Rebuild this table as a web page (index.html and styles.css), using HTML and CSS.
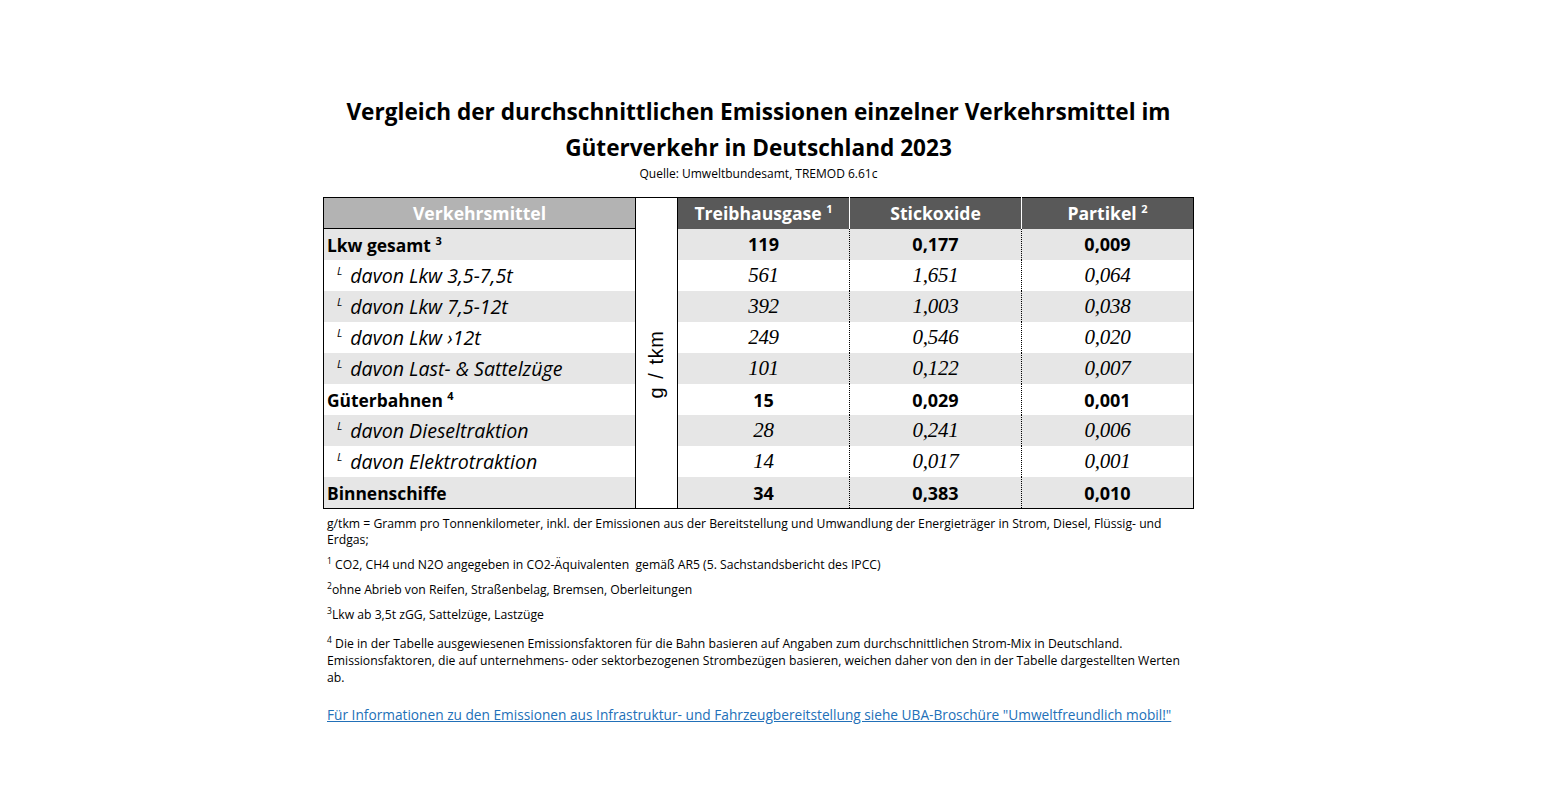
FILE: index.html
```html
<!DOCTYPE html>
<html lang="de">
<head>
<meta charset="utf-8">
<title>Vergleich der Emissionen im Güterverkehr</title>
<link rel="stylesheet" href="styles.css">
</head>
<body>
<div class="wrap">
  <h1 class="title">Vergleich der durchschnittlichen Emissionen einzelner Verkehrsmittel im<br>Güterverkehr in Deutschland 2023</h1>
  <p class="source">Quelle: Umweltbundesamt, TREMOD 6.61c</p>
  <table class="emis">
    <colgroup>
      <col class="c-name"><col class="c-unit"><col class="c-val"><col class="c-val"><col class="c-val">
    </colgroup>
    <thead>
      <tr>
        <th class="h-name">Verkehrsmittel</th>
        <th class="h-unit"></th>
        <th class="h-val">Treibhausgase <sup>1</sup></th>
        <th class="h-val">Stickoxide</th>
        <th class="h-val">Partikel <sup>2</sup></th>
      </tr>
    </thead>
    <tbody>
      <tr class="main odd">
        <td class="name">Lkw gesamt <sup>3</sup></td>
        <td class="unit" rowspan="9"><span class="unit-label">g / tkm</span></td>
        <td class="val first">119</td><td class="val">0,177</td><td class="val">0,009</td>
      </tr>
      <tr class="sub">
        <td class="name"><sup class="l">L</sup>davon Lkw 3,5-7,5t</td>
        <td class="val first">561</td><td class="val">1,651</td><td class="val">0,064</td>
      </tr>
      <tr class="sub odd">
        <td class="name"><sup class="l">L</sup>davon Lkw 7,5-12t</td>
        <td class="val first">392</td><td class="val">1,003</td><td class="val">0,038</td>
      </tr>
      <tr class="sub">
        <td class="name"><sup class="l">L</sup>davon Lkw ›12t</td>
        <td class="val first">249</td><td class="val">0,546</td><td class="val">0,020</td>
      </tr>
      <tr class="sub odd">
        <td class="name"><sup class="l">L</sup>davon Last- &amp; Sattelzüge</td>
        <td class="val first">101</td><td class="val">0,122</td><td class="val">0,007</td>
      </tr>
      <tr class="main">
        <td class="name">Güterbahnen <sup>4</sup></td>
        <td class="val first">15</td><td class="val">0,029</td><td class="val">0,001</td>
      </tr>
      <tr class="sub odd">
        <td class="name"><sup class="l">L</sup>davon Dieseltraktion</td>
        <td class="val first">28</td><td class="val">0,241</td><td class="val">0,006</td>
      </tr>
      <tr class="sub">
        <td class="name"><sup class="l">L</sup>davon Elektrotraktion</td>
        <td class="val first">14</td><td class="val">0,017</td><td class="val">0,001</td>
      </tr>
      <tr class="main odd">
        <td class="name">Binnenschiffe</td>
        <td class="val first">34</td><td class="val">0,383</td><td class="val">0,010</td>
      </tr>
    </tbody>
  </table>
  <div class="notes">
    <p>g/tkm = Gramm pro Tonnenkilometer, inkl. der Emissionen aus der Bereitstellung und Umwandlung der Energieträger in Strom, Diesel, Flüssig- und Erdgas;</p>
    <p><sup>1</sup> CO2, CH4 und N2O angegeben in CO2-Äquivalenten&nbsp; gemäß AR5 (5. Sachstandsbericht des IPCC)</p>
    <p><sup>2</sup>ohne Abrieb von Reifen, Straßenbelag, Bremsen, Oberleitungen</p>
    <p><sup>3</sup>Lkw ab 3,5t zGG, Sattelzüge, Lastzüge</p>
    <p class="fn4"><sup>4</sup> Die in der Tabelle ausgewiesenen Emissionsfaktoren für die Bahn basieren auf Angaben zum durchschnittlichen Strom-Mix in Deutschland. Emissionsfaktoren, die auf unternehmens- oder sektorbezogenen Strombezügen basieren, weichen daher von den in der Tabelle dargestellten Werten ab.</p>
    <p class="link-line"><a href="#">Für Informationen zu den Emissionen aus Infrastruktur- und Fahrzeugbereitstellung siehe UBA-Broschüre "Umweltfreundlich mobil!"</a></p>
  </div>
</div>
</body>
</html>
```

FILE: styles.css
```css
html, body {
  margin: 0;
  padding: 0;
  background: #ffffff;
}

body {
  font-family: "Open Sans", Lato, sans-serif;
  color: #000000;
}

.wrap {
  width: 871px;
  margin-left: 323px;
  padding-top: 94px;
}

.title {
  margin: 0;
  font-size: 22.6px;
  line-height: 36px;
  font-weight: 700;
  text-align: center;
}

.source {
  margin: 0 0 15px 0;
  font-size: 12px;
  line-height: 16px;
  text-align: center;
}

.emis {
  width: 871px;
  border-collapse: collapse;
  table-layout: fixed;
  border: 1px solid #000;
}

.c-name { width: 312px; }
.c-unit { width: 42px; }
.c-val { width: 172px; }

.emis th {
  height: 30px;
  padding: 0;
  color: #ffffff;
  font-size: 17.6px;
  font-weight: 700;
  text-align: center;
  vertical-align: middle;
}

.emis th sup,
.emis td sup {
  font-size: 11px;
  vertical-align: 7px;
  line-height: 0;
}

.h-name {
  background: #b3b3b3;
  border-bottom: 1px solid #000;
}

.h-unit {
  background: #ffffff;
  border-left: 1px solid #000;
  border-right: 1px solid #000;
}

.h-val {
  background: #595959;
  border-left: 1px solid #ffffff;
}

.h-unit + .h-val {
  border-left: 1px solid #000;
}

.emis td {
  height: 31px;
  padding: 0;
  vertical-align: middle;
  white-space: nowrap;
}

.emis tr.odd td {
  background: #e6e6e6;
}

.emis td.unit {
  background: #ffffff !important;
  border-left: 1px solid #000;
  border-right: 1px solid #000;
  text-align: center;
}

.unit-label {
  display: inline-block;
  transform: translate(-14px, -4px) rotate(-90deg);
  font-family: "Liberation Sans", Arial, sans-serif;
  font-size: 20px;
  letter-spacing: 0.6px;
  word-spacing: 2px;
  white-space: nowrap;
}

.name {
  padding-left: 3px !important;
  font-size: 17.4px;
}

.main .name {
  font-weight: 700;
}

.sub .name {
  font-style: italic;
  font-size: 19.6px;
  padding-left: 13px !important;
}

.sub .name sup.l {
  font-size: 11px;
  vertical-align: 8px;
  margin-right: 8px;
}

.val {
  text-align: center;
  border-left: 1px dotted #000;
}

.val.first {
  border-left: 1px solid #000;
}

.main .val {
  font-weight: 700;
  font-size: 18px;
}

.sub .val {
  font-family: "Liberation Serif", "Times New Roman", serif;
  font-style: italic;
  font-size: 21px;
  letter-spacing: -0.3px;
}

.notes {
  padding-top: 7px;
  font-size: 12.2px;
  line-height: 16px;
}

.notes p {
  width: 858px;
  margin: 0 0 9px 4px;
}

.notes sup {
  font-size: 8.5px;
  line-height: 0;
  vertical-align: 5px;
}

.notes p.fn4 {
  margin-top: 12px;
  line-height: 17px;
}

.notes .link-line {
  margin-top: 21px;
  font-size: 13.7px;
  line-height: 16px;
  width: 867px;
}

.notes a {
  color: #2270b8;
  text-decoration: underline;
}
```
